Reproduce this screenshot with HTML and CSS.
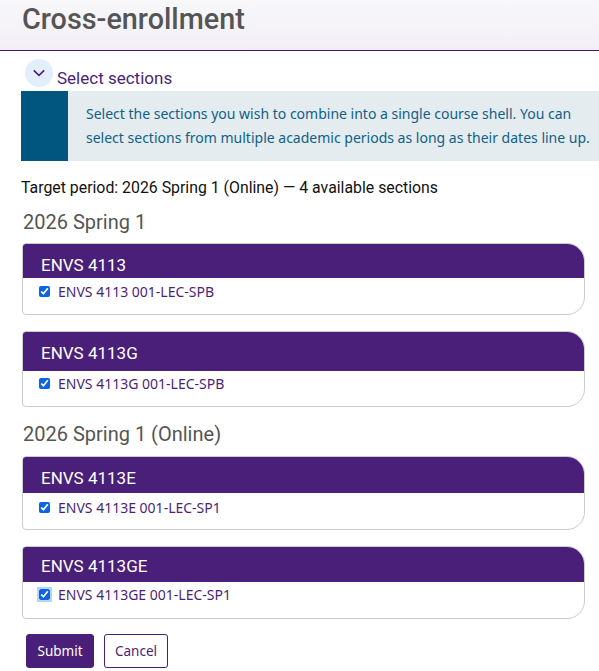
FILE: index.html
```html
<!DOCTYPE html>
<html lang="en">
<head>
    <meta charset="UTF-8">
    <meta name="viewport" content="width=device-width, initial-scale=1.0">
    <title>Cross-enrollment</title>
    <link rel="stylesheet" href="styles.css">
</head>
<body>
    <header class="page-header">
        <h1>Cross-enrollment</h1>
    </header>
    <div class="toggle-row">
        <span class="toggle-icon">
            <svg width="14" height="14" viewBox="0 0 14 14"><path d="M1.8 4.3 L7 9.3 L12.2 4.3" fill="none" stroke="#4a1f7a" stroke-width="1.6"/></svg>
        </span>
        <span class="toggle-label">Select sections</span>
    </div>
    <div class="alert">
        <div class="alert-band"></div>
        <p>Select the sections you wish to combine into a single course shell. You can<br>select sections from multiple academic periods as long as their dates line up.</p>
    </div>
    <p class="target">Target period: 2026 Spring 1 (Online) — 4 available sections</p>

    <h2 class="period first">2026 Spring 1</h2>
    <div class="card card-a">
        <div class="card-head">ENVS 4113</div>
        <label class="section"><input type="checkbox" checked> ENVS 4113 001-LEC-SPB</label>
    </div>
    <div class="card card-b">
        <div class="card-head">ENVS 4113G</div>
        <label class="section"><input type="checkbox" checked> ENVS 4113G 001-LEC-SPB</label>
    </div>

    <h2 class="period second">2026 Spring 1 (Online)</h2>
    <div class="card card-c">
        <div class="card-head">ENVS 4113E</div>
        <label class="section"><input type="checkbox" checked> ENVS 4113E 001-LEC-SP1</label>
    </div>
    <div class="card card-d">
        <div class="card-head">ENVS 4113GE</div>
        <label class="section focused"><input type="checkbox" checked> ENVS 4113GE 001-LEC-SP1</label>
    </div>

    <div class="actions">
        <button class="btn btn-submit">Submit</button>
        <button class="btn btn-cancel">Cancel</button>
    </div>
</body>
</html>
```

FILE: styles.css
```css
body {
    font-family: Roboto, Arial, sans-serif;
    margin: 0;
    padding: 0;
    background-color: white;
    height: 671px;
    overflow: hidden;
}
.page-header {
    height: 50px;
    border-bottom: 1px solid #3f1a70;
    background: linear-gradient(#f8f7fa, #f2f0f6);
    padding-left: 22px;
}
h1 {
    margin: 0;
    font-size: 28.8px;
    font-weight: 500;
    line-height: 38px;
    color: #555;
}
.toggle-row {
    display: flex;
    align-items: flex-end;
    height: 40px;
    padding-left: 25px;
}
.toggle-icon {
    display: flex;
    align-items: center;
    justify-content: center;
    width: 28px;
    height: 28px;
    margin-bottom: 4px;
    border-radius: 50%;
    background-color: #e3eefc;
}
.toggle-label {
    margin-left: 4px;
    font-size: 17px;
    line-height: 19px;
    margin-bottom: 3px;
    color: #4a1f7a;
}
.alert {
    display: flex;
    height: 70px;
    margin-left: 21px;
    background-color: #e5ecf0;
}
.alert-band {
    flex-shrink: 0;
    width: 47px;
    background-color: #00567f;
}
.alert p {
    margin: 0;
    padding: 11px 0 0 18px;
    font-family: "Noto Sans", Arial, sans-serif;
    font-size: 14px;
    line-height: 24px;
    white-space: nowrap;
    color: #0f6188;
}
.target {
    margin: 18px 0 0 21px;
    font-size: 15.85px;
    line-height: 17px;
    color: #111;
}
.period {
    margin: 0 0 0 23px;
    font-size: 20px;
    font-weight: 400;
    line-height: 24px;
    color: #555;
}
.period.first {
    margin-top: 14px;
    margin-bottom: 9px;
}
.period.second {
    margin-top: 15px;
    margin-bottom: 10px;
}
.card {
    width: 561px;
    margin-left: 22px;
    background-color: white;
    border: 1px solid #ccc;
    border-radius: 4px 18px 18px 4px;
    overflow: hidden;
}
.card-head {
    box-sizing: border-box;
    padding: 10px 0 0 18px;
    background-color: #4a1f7a;
    font-size: 17px;
    line-height: 22px;
    color: white;
}
.card-a { height: 70px; margin-bottom: 16px; }
.card-a .card-head { height: 34px; }
.card-a .section { height: 26px; }
.card-b { height: 74px; }
.card-b .card-head { height: 39px; }
.card-b .section { height: 25px; }
.card-c { height: 72px; margin-bottom: 16px; }
.card-c .card-head { height: 36px; }
.card-d { height: 71px; }
.card-d .card-head { height: 35px; padding-top: 8px; }
.card-d .section { height: 25px; }
.section {
    display: flex;
    align-items: center;
    height: 28px;
    padding-left: 16px;
    font-family: "Noto Sans", Arial, sans-serif;
    font-size: 14px;
    color: #4a1f7a;
}
.section input {
    width: 11px;
    height: 11px;
    margin: 0 8px 0 0;
    accent-color: #0b63e5;
}
.section.focused input {
    outline: 2px solid #b5d5fb;
}
.actions {
    display: flex;
    gap: 10px;
    margin: 15px 0 0 26px;
}
.btn {
    height: 34px;
    border-radius: 3px;
    border: 1px solid #4a1f7a;
    font-family: "Noto Sans", Arial, sans-serif;
    font-size: 13.5px;
    padding: 0;
}
.btn-submit {
    width: 68px;
    background-color: #4a1f7a;
    color: white;
}
.btn-cancel {
    width: 64px;
    background-color: white;
    color: #4a1f7a;
}
```
